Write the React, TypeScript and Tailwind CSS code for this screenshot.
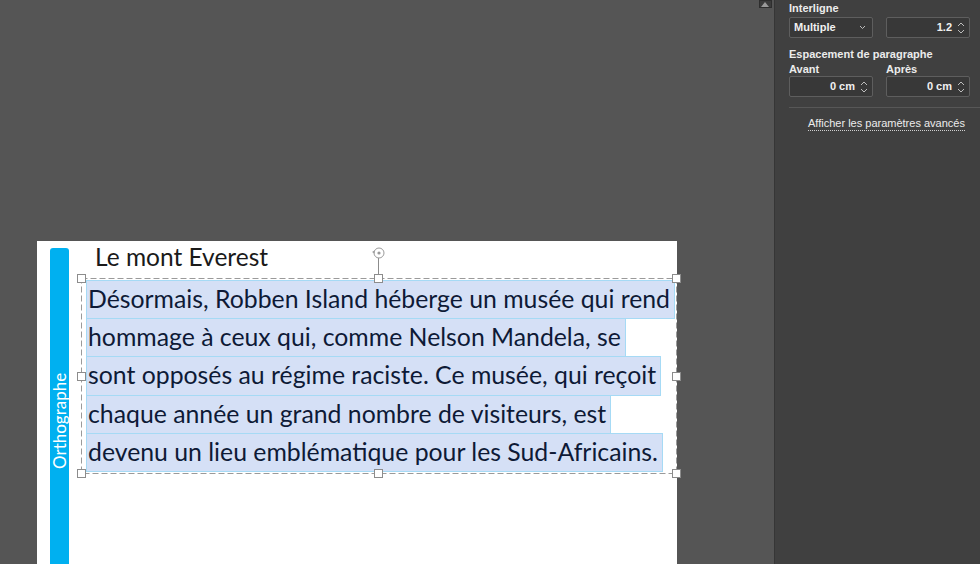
import React from "react";

const lines = [
  "Désormais, Robben Island héberge un musée qui rend",
  "hommage à ceux qui, comme Nelson Mandela, se",
  "sont opposés au régime raciste. Ce musée, qui reçoit",
  "chaque année un grand nombre de visiteurs, est",
  "devenu un lieu emblématique pour les Sud-Africains.",
];

function Handle({ className }: { className: string }) {
  return <div className={"absolute w-[9px] h-[9px] bg-white border border-[#8c8c8c] " + className} />;
}

function Spinner() {
  return (
    <svg width="8" height="14" viewBox="0 0 8 14" className="ml-[5px]">
      <path d="M1 5 L4 2 L7 5" fill="none" stroke="#bdbdbd" strokeWidth="1" />
      <path d="M1 9 L4 12 L7 9" fill="none" stroke="#bdbdbd" strokeWidth="1" />
    </svg>
  );
}

function NumberBox({ value }: { value: string }) {
  return (
    <div className="w-[84px] h-[21px] border border-[#5e5e5e] bg-[#383838] rounded-[2px] flex items-center justify-end pr-[4px] text-[11px] font-bold text-[#f0f0f0]">
      <span>{value}</span>
      <Spinner />
    </div>
  );
}

export default function App() {
  return (
    <div className="w-[980px] h-[564px] flex overflow-hidden bg-[#555555]" style={{ fontFamily: "Lato, 'Open Sans', sans-serif" }}>
      {/* canvas */}
      <div className="w-[756px] h-full pt-[241px] pl-[37px]">
        <div className="relative w-[640px] h-[323px] bg-white flex">
          <div className="ml-[13px] mt-[7px] w-[21px] h-[316px] bg-[#00b0f0] rounded-t-[3px] flex justify-center pt-[121px]">
            <span className="[writing-mode:vertical-rl] rotate-180 text-white text-[17px] leading-none h-[100px]">Orthographe</span>
          </div>
          <div className="flex flex-col ml-[12px]">
            <div className="h-[37px] pl-[14px] pt-[2px] text-[24.5px] leading-[28px] text-[#1a1a1a]">Le mont Everest</div>
            <div className="relative w-[596px] h-[196px] pl-[5px] pt-[3px]">
              <svg className="absolute inset-0" width="596" height="196">
                <rect x="0.5" y="0.5" width="595" height="195" fill="none" stroke="#9a9a9a" strokeWidth="1" strokeDasharray="6 3" />
              </svg>
              {lines.map((l, i) => (
                <div key={i} className="flex -mt-px first:mt-0">
                  <span className="inline-block h-[39.2px] bg-[#d5e0f6] border border-[#a6daf5] pl-px pr-[4px] text-[24.8px] leading-[36px] text-[#0e1a36] whitespace-nowrap">{l}</span>
                </div>
              ))}
              {/* handles */}
              <Handle className="-left-[4px] -top-[4px]" />
              <Handle className="left-[293px] -top-[4px]" />
              <Handle className="-right-[4px] -top-[4px]" />
              <Handle className="-left-[4px] top-[94px]" />
              <Handle className="-right-[4px] top-[94px]" />
              <Handle className="-left-[4px] -bottom-[4px]" />
              <Handle className="left-[293px] -bottom-[4px]" />
              <Handle className="-right-[4px] -bottom-[4px]" />
              <div className="absolute left-[297px] -top-[20px] w-px h-[16px] bg-[#8c8c8c]" />
              <svg className="absolute left-[290px] -top-[32px]" width="16" height="14" viewBox="0 0 16 14">
                <circle cx="8" cy="7" r="5" fill="none" stroke="#9a9a9a" strokeWidth="1" />
                <circle cx="8" cy="7" r="1.6" fill="#9a9a9a" />
                <path d="M1 6 L3.5 4.5 L3.5 7.5 Z" fill="#9a9a9a" />
              </svg>
            </div>
          </div>
        </div>
      </div>
      {/* scrollbar */}
      <div className="w-[18px] h-full flex justify-center">
        <div className="w-[13px] h-[8px] bg-[#3c3c3c] border border-[#2e2e2e] flex items-end justify-center">
          <svg width="8" height="5" viewBox="0 0 8 5"><path d="M0 5 L4 0 L8 5 Z" fill="#9a9a9a" /></svg>
        </div>
      </div>
      {/* right panel */}
      <div className="w-[206px] h-full bg-[#404040] border-l border-[#363636] pl-[14px] text-[#ececec]" style={{ fontFamily: "'Liberation Sans', Arial, sans-serif" }}>
        <div className="text-[11px] font-bold leading-[13px] pt-[2px]">Interligne</div>
        <div className="flex gap-[13px] mt-[2px]">
          <div className="w-[84px] h-[21px] border border-[#5e5e5e] bg-[#383838] rounded-[2px] flex items-center justify-between px-[4px] text-[11px] font-bold text-[#f0f0f0]">
            <span>Multiple</span>
            <svg width="7" height="5" viewBox="0 0 7 5" className="mr-[2px]"><path d="M1 1 L3.5 3.5 L6 1" fill="none" stroke="#bdbdbd" strokeWidth="1" /></svg>
          </div>
          <NumberBox value="1.2" />
        </div>
        <div className="text-[11px] font-bold leading-[13px] mt-[10px]">Espacement de paragraphe</div>
        <div className="flex gap-[13px] mt-[2px]">
          <div className="flex flex-col">
            <span className="text-[11px] font-bold leading-[13px]">Avant</span>
            <NumberBox value="0 cm" />
          </div>
          <div className="flex flex-col">
            <span className="text-[11px] font-bold leading-[13px]">Après</span>
            <NumberBox value="0 cm" />
          </div>
        </div>
        <div className="h-px bg-[#575757] mt-[10px]" />
        <div className="pl-[19px] mt-[2px]">
          <span className="text-[11px] leading-[13px] border-b border-dotted border-[#d0d0d0] pb-[1px]">Afficher les paramètres avancés</span>
        </div>
      </div>
    </div>
  );
}
